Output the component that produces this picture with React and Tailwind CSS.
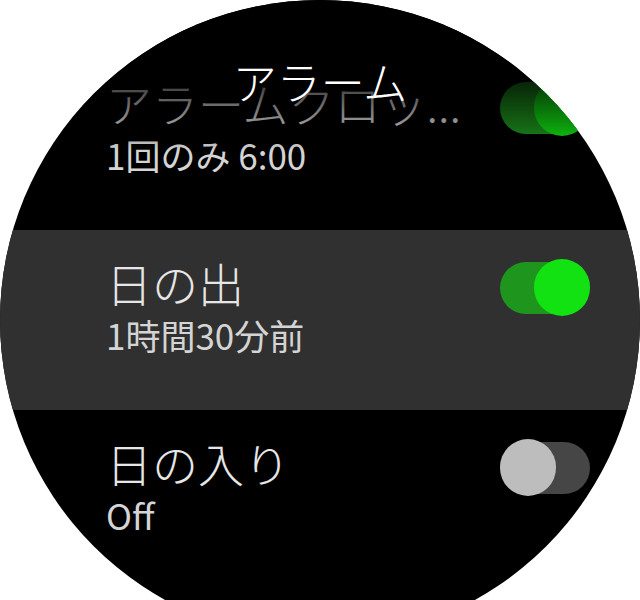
import React from "react"

const rows = [
  { title: "アラームクロッ...", sub: "1回のみ 6:00", on: true, active: false },
  { title: "日の出", sub: "1時間30分前", on: true, active: true },
  { title: "日の入り", sub: "Off", on: false, active: false },
]

function Toggle({ on }) {
  return (
    <div className="relative mt-[29px] h-[57px] w-[90px] shrink-0">
      {on ? (
        <>
          <div className="absolute left-0 top-[3px] h-[52px] w-[86px] rounded-full bg-[#1e961e]" />
          <div className="absolute right-0 top-0 h-[57px] w-[56px] rounded-full bg-[#12e212]" />
        </>
      ) : (
        <>
          <div className="absolute right-0 top-[3px] h-[52px] w-[86px] rounded-full bg-[#464646]" />
          <div className="absolute left-0 top-0 h-[57px] w-[56px] rounded-full bg-[#bdbdbd]" />
        </>
      )}
    </div>
  )
}

function Row({ title, sub, on, active }) {
  return (
    <div
      className={
        active
          ? "flex h-[180px] items-start justify-between bg-[#303030] pl-[106px] pr-[50px]"
          : "flex h-[180px] items-start justify-between pl-[106px] pr-[50px]"
      }
    >
      <div className="flex flex-col pt-[29px]">
        <span className="whitespace-nowrap text-[46px] font-light leading-[46px] text-[#e6e6e6]">
          {title}
        </span>
        <span className="mt-[11px] whitespace-nowrap text-[35px] font-normal leading-[38px] text-[#d4d4d4]">
          {sub}
        </span>
      </div>
      <Toggle on={on} />
    </div>
  )
}

export default function App() {
  return (
    <div className="h-[600px] w-[640px] overflow-hidden bg-white font-['Noto_Sans_CJK_JP','Noto_Sans',sans-serif]">
      <div className="relative h-[640px] w-[640px] overflow-hidden rounded-full bg-black">
        {/* リスト */}
        <div className="flex flex-col pt-[50px]">
          {rows.map((r) => (
            <Row key={r.title} {...r} />
          ))}
        </div>

        {/* スクロール時のフェード */}
        <div className="pointer-events-none absolute left-0 right-0 top-0 h-[152px] bg-[linear-gradient(to_bottom,#000_0px,#000_45px,rgba(0,0,0,0.7)_88px,rgba(0,0,0,0.3)_128px,rgba(0,0,0,0)_152px)]" />

        {/* タイトル */}
        <div className="absolute left-0 right-0 top-[55px] text-center text-[44px] font-light leading-[52px] text-white">
          アラーム
        </div>
      </div>
    </div>
  )
}
